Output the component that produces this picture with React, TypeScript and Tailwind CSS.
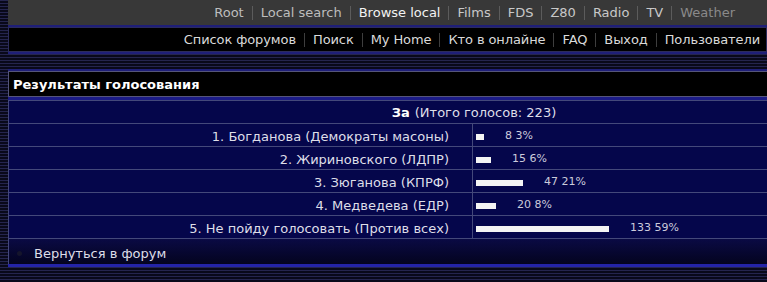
import React from 'react'

const topLinks = [
  { label: 'Root', tone: 'text-[#bdbdbd]' },
  { label: 'Local search', tone: 'text-[#bdbdbd]' },
  { label: 'Browse local', tone: 'text-[#f2f2f2]' },
  { label: 'Films', tone: 'text-[#c8c8c8]' },
  { label: 'FDS', tone: 'text-[#c8c8c8]' },
  { label: 'Z80', tone: 'text-[#c8c8c8]' },
  { label: 'Radio', tone: 'text-[#c8c8c8]' },
  { label: 'TV', tone: 'text-[#c8c8c8]' },
  { label: 'Weather', tone: 'text-[#8a8a8a]' }
]

const forumLinks = ['Список форумов', 'Поиск', 'My Home', 'Кто в онлайне', 'FAQ', 'Выход', 'Пользователи']

const results = [
  { label: '1. Богданова (Демократы масоны)', votes: 8, pct: 3 },
  { label: '2. Жириновского (ЛДПР)', votes: 15, pct: 6 },
  { label: '3. Зюганова (КПРФ)', votes: 47, pct: 21 },
  { label: '4. Медведева (ЕДР)', votes: 20, pct: 8 },
  { label: '5. Не пойду голосовать (Против всех)', votes: 133, pct: 59 }
]

const stripes =
  'bg-[repeating-linear-gradient(to_bottom,#25254e_0px,#25254e_1px,#09091a_1px,#09091a_3px)]'

function Sep({ color }: { color: string }) {
  return <span className={`mx-2 inline-block h-[14px] w-px ${color}`} />
}

export default function App() {
  return (
    <div
      className={`h-[282px] w-[767px] overflow-hidden ${stripes}`}
      style={{ fontFamily: '"DejaVu Sans", Verdana, sans-serif' }}
    >
      <div className="w-[940px] pl-2">
        {/* Site nav */}
        <div className="w-[759px] border-b-2 border-[#1f1f78] bg-[#383838]">
          <div className="flex h-[25px] items-center justify-end pr-[32px] pt-px text-[13px]">
            {topLinks.map((l, i) => (
              <React.Fragment key={l.label}>
                {i > 0 && <Sep color="bg-[#5c5c5c]" />}
                <span className={l.tone}>{l.label}</span>
              </React.Fragment>
            ))}
          </div>
        </div>

        {/* Forum nav */}
        <div className="w-[759px] border-b-2 border-[#1f1f78]">
          <div className="flex h-[25px] items-center justify-end border border-[#2c2c5c] bg-black pr-[6px] pt-px text-[13px] tracking-[-0.1px] text-[#dadada]">
            {forumLinks.map((l, i) => (
              <React.Fragment key={l}>
                {i > 0 && <Sep color="bg-[#3e3e3e]" />}
                <span>{l}</span>
              </React.Fragment>
            ))}
          </div>
        </div>

        <div className="h-[15px]" />

        {/* Poll results panel */}
        <div className="border-t-2 border-[#1f1f78]">
          <div className="flex h-[26px] items-center border border-[#55557a] bg-black px-[4px] pt-px text-[13px] font-bold text-white">
            Результаты голосования
          </div>
          <div className="h-[3px] bg-[#1b1b86]" />
          <div className="border-x border-[#44487a] bg-[#05064b] text-[13px] text-[#dedee8]">
            <div className="flex h-[24px] items-center justify-center border-y border-[#44487a] pt-px">
              <b className="mr-[5px] text-white">За</b>
              (Итого голосов: 223)
            </div>
            {results.map((r) => (
              <div key={r.label} className="flex h-[23px] border-b border-[#44487a]">
                <div className="flex w-[464px] items-center justify-end border-r border-[#44487a] pr-[23px] pt-[3px]">
                  {r.label}
                </div>
                <div className="flex items-center pl-[3px] pt-[3px] text-[11px] text-[#cbcbdc]">
                  <span className="h-[6px] bg-[#f4f4f4]" style={{ width: r.votes }} />
                  <span className="ml-[21px]">
                    {r.votes} {r.pct}%
                  </span>
                </div>
              </div>
            ))}
            <div className="flex h-[25px] items-center bg-[linear-gradient(to_bottom,#0a0a44,#04041f)] pt-[4px]">
              <span className="ml-[8px] mr-[12px] inline-block h-[5px] w-[5px] rounded-full bg-[#15152c]" />
              Вернуться в форум
            </div>
          </div>
          <div className="h-[3px] bg-[#2424a8]" />
        </div>
      </div>
    </div>
  )
}
